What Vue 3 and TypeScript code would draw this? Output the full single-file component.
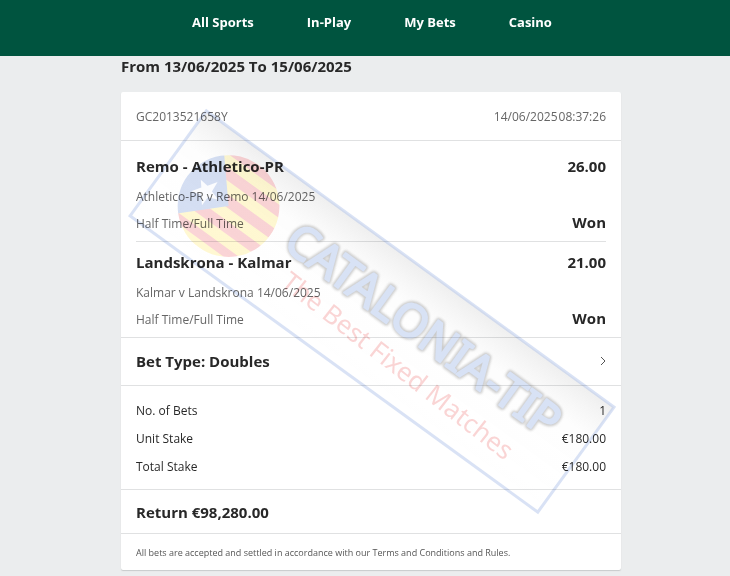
<script setup lang="ts">
interface Selection {
  name: string
  odds: string
  fixture: string
  market: string
  result: string
}

const navItems: string[] = ['All Sports', 'In-Play', 'My Bets', 'Casino']

const selections: Selection[] = [
  {
    name: 'Remo - Athletico-PR',
    odds: '26.00',
    fixture: 'Athletico-PR v Remo 14/06/2025',
    market: 'Half Time/Full Time',
    result: 'Won',
  },
  {
    name: 'Landskrona - Kalmar',
    odds: '21.00',
    fixture: 'Kalmar v Landskrona 14/06/2025',
    market: 'Half Time/Full Time',
    result: 'Won',
  },
]

const stakes: { label: string; value: string }[] = [
  { label: 'No. of Bets', value: '1' },
  { label: 'Unit Stake', value: '€180.00' },
  { label: 'Total Stake', value: '€180.00' },
]
</script>

<template>
  <div class="page">
    <header class="top-bar">
      <nav class="nav">
        <a v-for="item in navItems" :key="item" class="nav-link" href="#">{{ item }}</a>
      </nav>
    </header>

    <main class="content">
      <h1 class="period">From 13/06/2025 To 15/06/2025</h1>

      <article class="card">
        <div class="row section reference">
          <span>GC2013521658Y</span>
          <span class="stamp"><span>14/06/2025</span><span>08:37:26</span></span>
        </div>

        <ul class="selections">
          <li v-for="s in selections" :key="s.name" class="selection">
            <div class="row strong">
              <span>{{ s.name }}</span>
              <span>{{ s.odds }}</span>
            </div>
            <div class="row muted fixture">{{ s.fixture }}</div>
            <div class="row">
              <span class="muted market">{{ s.market }}</span>
              <span class="strong">{{ s.result }}</span>
            </div>
          </li>
        </ul>

        <button type="button" class="row section strong bet-type">
          <span>Bet Type: Doubles</span>
          <svg class="chevron" viewBox="0 0 6 10" aria-hidden="true">
            <path d="M1 1l4 4-4 4" />
          </svg>
        </button>

        <dl class="section stakes">
          <div v-for="s in stakes" :key="s.label" class="row">
            <dt>{{ s.label }}</dt>
            <dd>{{ s.value }}</dd>
          </div>
        </dl>

        <div class="row section strong return">Return €98,280.00</div>

        <p class="terms">
          All bets are accepted and settled in accordance with our Terms and Conditions and Rules.
        </p>

        <svg class="watermark" viewBox="0 0 500 479" aria-hidden="true">
          <defs>
            <linearGradient id="panel" x1="0" y1="0" x2="0" y2="1">
              <stop offset="0" stop-color="#777" stop-opacity="0.12" />
              <stop offset="0.3" stop-color="#999" stop-opacity="0.02" />
              <stop offset="1" stop-color="#fff" stop-opacity="0" />
            </linearGradient>
            <clipPath id="ball"><circle cx="74" cy="64" r="51" /></clipPath>
            <filter id="soft" x="-5%" y="-30%" width="110%" height="160%">
              <feGaussianBlur stdDeviation="1" />
            </filter>
          </defs>
          <g transform="translate(85 19) rotate(36)">
            <rect class="frame" width="505" height="130" fill="url(#panel)" />
            <g clip-path="url(#ball)" opacity="0.2">
              <rect x="23" y="13" width="102" height="102" fill="#ffdc20" />
              <path
                d="M23 13h102v9H23zM23 33h102v11H23zM23 55h102v11H23zM23 77h102v11H23zM23 99h102v9H23z"
                fill="#e52b35"
              />
              <path d="M20 5L36 20L74 64L34 103L20 122Z" fill="#2d62c4" />
            </g>
            <path
              d="M36 59l9 1 6-9 1 11 10 3-10 4 0 10-7-8-10 3 6-9z"
              fill="#fff"
              opacity="0.9"
            />
            <text class="brand brand-halo" x="141" y="66" filter="url(#soft)">CATALONIA-TIP</text>
            <text class="brand brand-face" x="141" y="66">CATALONIA-TIP</text>
            <text class="tagline" x="162" y="98" transform="rotate(2 162 98)">The Best Fixed Matches</text>
          </g>
        </svg>
      </article>
    </main>
  </div>
</template>

<style>
body {
  background: #ebedee;
}
</style>

<style scoped>
.page {
  font-family: 'Open Sans', 'Noto Sans', sans-serif;
  font-size: 12px;
  line-height: 20px;
  color: #282828;
  padding-bottom: 5px;
}

.top-bar {
  background: #00543f;
  padding: 12px 16px 24px;
}

.nav {
  display: flex;
  justify-content: center;
  gap: 53px;
  padding-left: 14px;
}

.nav-link {
  color: #fff;
  font-size: 13px;
  font-weight: 700;
  text-decoration: none;
}

.content {
  max-width: 500px;
  margin: 0 auto;
  padding: 0 16px;
  position: relative;
  left: 6px;
}

.period {
  margin: 0 0 16px;
  font-size: 15px;
  line-height: 20px;
  font-weight: 700;
}

.card {
  position: relative;
  background: #fff;
  border-radius: 2px;
  box-shadow: 0 1px 1px #c8cacb;
}

.row {
  display: flex;
  justify-content: space-between;
  align-items: center;
}

.section {
  padding: 0 15px;
  border-bottom: 1px solid #e0e1e2;
}

.strong {
  font-size: 15px;
  font-weight: 700;
}

.muted {
  color: #666;
}

.reference {
  height: 46px;
  padding-top: 2px;
  color: #666;
}

.stamp {
  display: flex;
  gap: 1px;
}

.selections {
  list-style: none;
  margin: 0;
  padding: 5px 15px 0;
  border-bottom: 1px solid #e0e1e2;
}

.selection {
  padding: 10px 0 9px;
}

.selection + .selection {
  border-top: 1px solid #e0e1e2;
}

.fixture {
  padding: 11px 0 5px;
}

.market {
  padding-top: 3px;
  line-height: 17px;
}

.bet-type {
  width: 100%;
  height: 48px;
  padding-bottom: 1px;
  border-width: 0 0 1px;
  background: none;
  color: inherit;
  font-family: inherit;
  text-align: left;
}

.chevron {
  width: 6px;
  height: 10px;
  fill: none;
  stroke: #555;
}

.stakes {
  margin: 0;
  padding-top: 11px;
  padding-bottom: 8px;
  line-height: 28px;
}

.stakes dd {
  margin: 0;
}

.return {
  height: 43px;
}

.terms {
  margin: 0;
  padding: 9px 15px 7px;
  font-size: 9px;
  color: #555;
}

.watermark {
  position: absolute;
  inset: 0;
  width: 100%;
  height: 100%;
  pointer-events: none;
  mix-blend-mode: multiply;
}

.frame {
  stroke: #b4c6ec;
  stroke-opacity: 0.5;
  stroke-width: 3;
}

.brand {
  font-family: 'Noto Sans', sans-serif;
  font-size: 46px;
  font-weight: 400;
  stroke-linejoin: round;
}

.brand-halo {
  fill: none;
  stroke: #999;
  stroke-width: 5;
  opacity: 0.5;
}

.brand-face {
  fill: #d8e2f5;
  stroke: #d8e2f5;
  stroke-width: 2;
}

.tagline {
  font-family: 'Noto Sans', sans-serif;
  font-size: 26px;
  fill: #e83030;
  opacity: 0.2;
}
</style>
